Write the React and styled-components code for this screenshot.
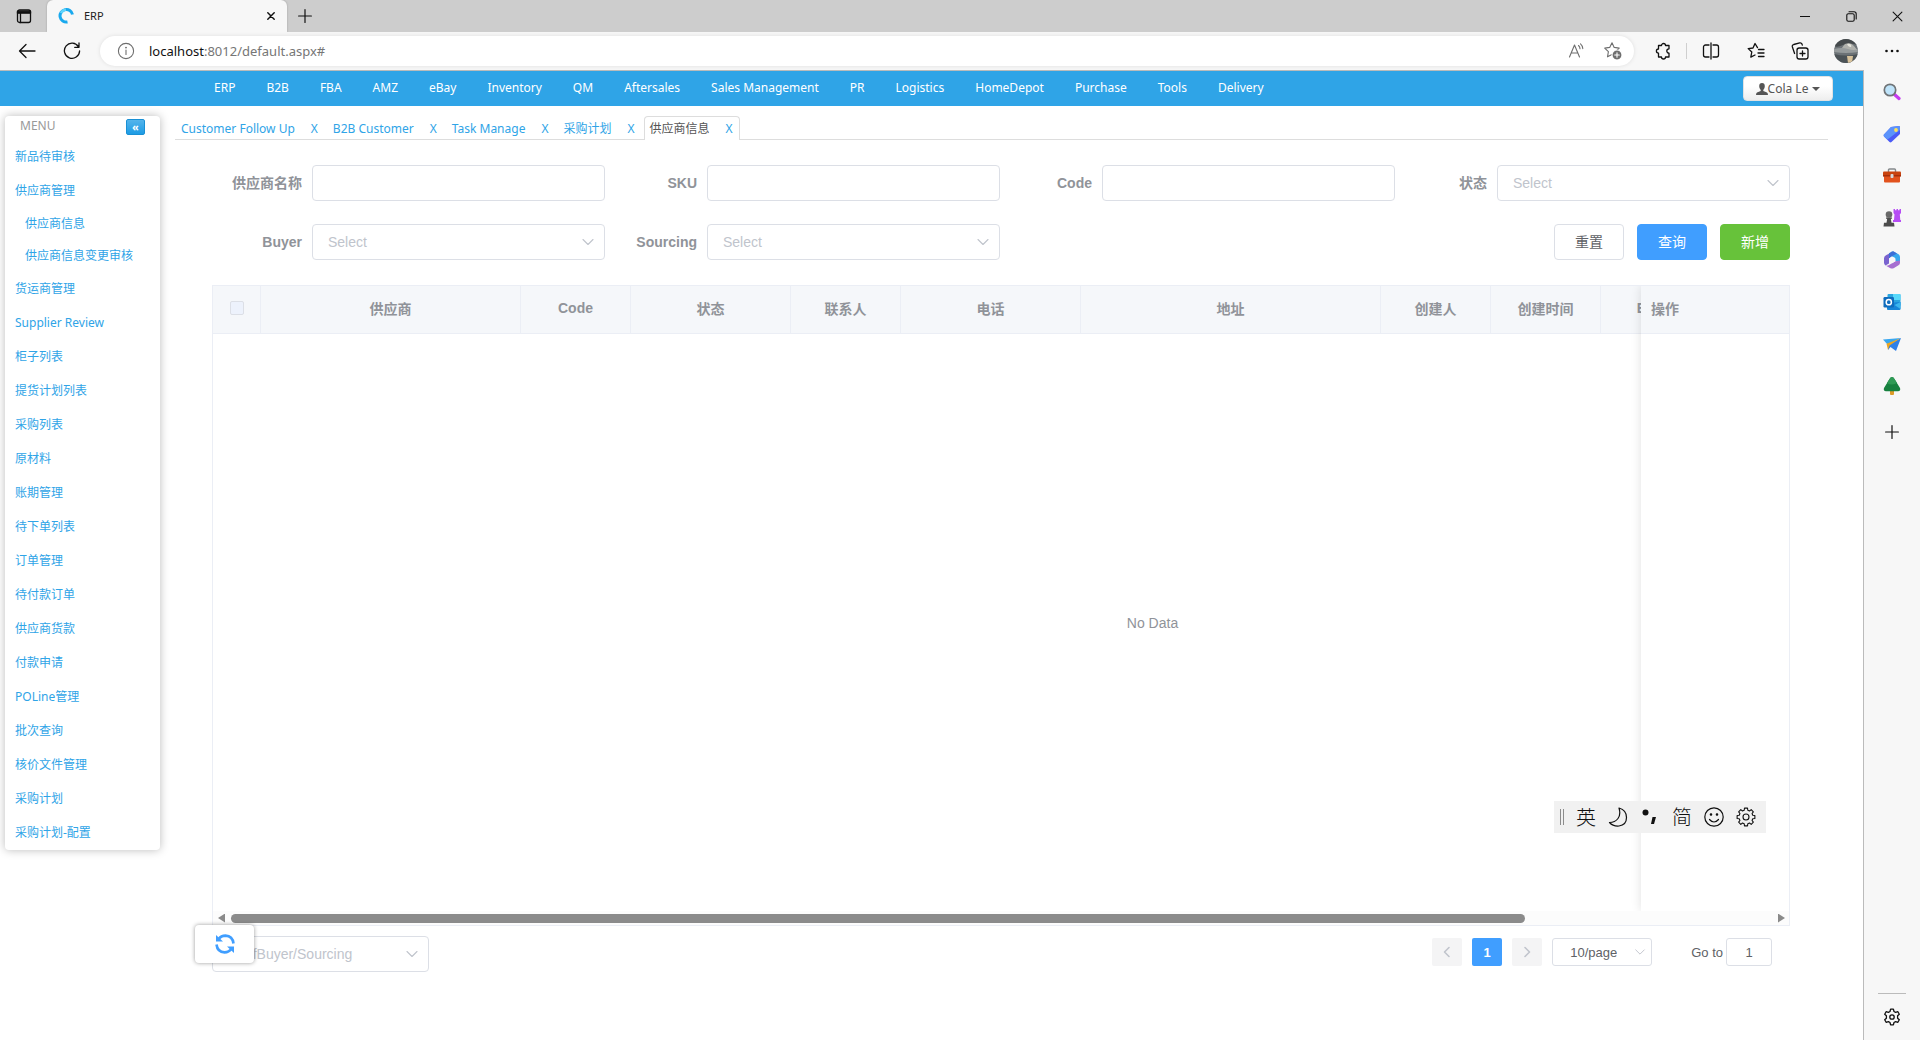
import React from "react";
import styled, { createGlobalStyle } from "styled-components";

const UI = '"Noto Sans", "Noto Sans CJK SC", sans-serif';
const FORM = '"Liberation Sans", "Noto Sans CJK SC", sans-serif';

const GlobalStyle = createGlobalStyle`
  * { box-sizing: border-box; }
  body { margin: 0; font-family: ${UI}; font-size: 12px; color: #555; background: #fff; }
  button, input, select { font: inherit; color: inherit; margin: 0; padding: 0; }
  button { cursor: pointer; }
  a { text-decoration: none; color: #2fa4e7; }
  ul { list-style: none; margin: 0; padding: 0; }
`;

/* ---------- browser frame ---------- */

const Window = styled.div`
  display: flex;
  flex-direction: column;
  min-height: 100vh;
`;

const TabStrip = styled.header`
  display: flex;
  height: 32px;
  background: #cdcdcd;
`;

const IconButton = styled.button`
  display: flex;
  align-items: center;
  justify-content: center;
  flex: none;
  width: ${(p) => p.$w || 44}px;
  height: ${(p) => p.$h || 32}px;
  border: 0;
  background: transparent;
  color: ${(p) => p.$color || "#111"};
`;

const BrowserTab = styled.div`
  display: flex;
  align-items: center;
  width: 240px;
  padding: 0 4px 0 11px;
  gap: 10px;
  background: #f7f7f7;
  border-radius: 6px 6px 0 0;
  color: #222;
  box-shadow: 0 0 2px #999;
  clip-path: inset(0 -3px 0 -3px);
`;

const TabTitle = styled.span`
  flex: 1;
  font-size: 11px;
  line-height: 16px;
`;

const WindowButtons = styled.div`
  display: flex;
  margin-left: auto;
`;

const Toolbar = styled.div`
  display: flex;
  align-items: center;
  height: 38px;
  padding: 0 6px 0 4px;
  background: #f7f7f7;
`;

const AddressBar = styled.form`
  display: flex;
  align-items: center;
  flex: 1;
  height: 30px;
  margin: 0 7px 0 6px;
  padding: 0 3px 0 17px;
  border-radius: 15px;
  background: #fff;
  box-shadow: 0 0 4px rgba(0, 0, 0, 0.1);
`;

const Url = styled.span`
  flex: 1;
  padding-left: 14px;
  font-size: 13px;
  line-height: 18px;
  color: #767676;
  b { font-weight: 400; color: #111; }
`;

const ToolDivider = styled.span`
  width: 1px;
  height: 16px;
  background: #cfcfcf;
  margin: 0 1px;
`;

const Avatar = styled.svg`
  border-radius: 50%;
`;

const Viewport = styled.div`
  display: flex;
  flex: 1;
`;

const Page = styled.div`
  flex: 1;
  min-width: 0;
  border-top: 1px solid #bbb;
  border-right: 1px solid #bbb;
  background: #fff;
`;

const Sidebar = styled.aside`
  display: flex;
  flex-direction: column;
  align-items: center;
  width: 56px;
  padding: 1px 0 2px;
  background: #f7f7f7;
`;

const SidebarAdd = styled(IconButton)`
  height: 50px;
`;

const SidebarRule = styled.hr`
  width: 28px;
  height: 1px;
  margin: auto 0 2px;
  border: 0;
  background: #bbb;
`;

/* ---------- site navigation ---------- */

const Nav = styled.nav`
  display: flex;
  gap: 1px;
  height: 35px;
  padding: 5px 30px 0 199px;
  background: #2fa4e7;
`;

const NavLink = styled.a`
  padding: 0 15px;
  font-size: 12px;
  line-height: 24px;
  color: #fff;
  white-space: nowrap;
`;

const UserButton = styled.button`
  display: flex;
  align-items: center;
  justify-content: center;
  width: 90px;
  height: 25px;
  margin-left: auto;
  border: 1px solid #e2e2e2;
  border-radius: 4px;
  background: linear-gradient(#fff 40%, #eee);
  font-size: 12px;
  color: #555;
`;

const Columns = styled.div`
  display: flex;
  align-items: flex-start;
  padding: 10px 35px 0 5px;
  gap: 15px;
`;

const MenuCard = styled.aside`
  flex: none;
  width: 155px;
  border-radius: 4px;
  background: #fff;
  box-shadow: 0 0 10px #bbb;
`;

const MenuHead = styled.div`
  display: flex;
  justify-content: space-between;
  height: 24px;
  padding: 3px 15px 0;
  font-size: 12px;
  line-height: 14px;
  color: #999;
`;

const CollapseButton = styled.button`
  width: 19px;
  height: 16px;
  border: 1px solid #1990d5;
  border-radius: 2px;
  background: linear-gradient(#54b4eb, #1d9ce5);
  color: #fff;
  font-size: 11px;
  font-weight: 700;
  line-height: 12px;
`;

const MenuLink = styled.a`
  display: block;
  padding-left: ${(p) => (p.$sub ? 20 : 10)}px;
  font-size: 12px;
  line-height: ${(p) => (p.$sub ? 32 : 34)}px;
`;

const Main = styled.main`
  flex: 1;
  min-width: 0;
`;

const Tabs = styled.ul`
  display: flex;
  height: 24px;
  border-bottom: 1px solid #ddd;
`;

const Tab = styled.li`
  display: flex;
  gap: 16px;
  height: ${(p) => (p.$active ? 24 : 23)}px;
  padding: 0 6px 0 ${(p) => (p.$active ? 5 : 6)}px;
  margin-right: 3px;
  border: solid #ddd;
  border-width: ${(p) => (p.$active ? "1px 1px 0" : "0")};
  border-radius: 4px 4px 0 0;
  background: #fff;
  font-size: 12px;
  line-height: ${(p) => (p.$active ? 23 : 25)}px;
  a:first-child { color: ${(p) => (p.$active ? "#555" : "#2fa4e7")}; }
`;

/* ---------- form and table ---------- */

const Panel = styled.div`
  padding: 25px 38px 0 37px;
  font-family: ${FORM};
  font-size: 14px;
`;

const SearchForm = styled.form`
  display: grid;
  grid-template-columns: repeat(4, 1fr);
  gap: 23px 2px;
`;

const Field = styled.div`
  display: flex;
  align-items: center;
`;

const Label = styled.label`
  width: 100px;
  padding-right: 10px;
  text-align: right;
  font-weight: 700;
  line-height: 20px;
  color: #909399;
`;

const TextInput = styled.input`
  flex: 1;
  min-width: 0;
  height: 36px;
  padding: 0 15px;
  border: 1px solid #dcdfe6;
  border-radius: 4px;
  background: #fff;
  outline: 0;
`;

const SelectBox = styled.div`
  display: grid;
  align-items: center;
  flex: ${(p) => (p.$w ? "none" : 1)};
  width: ${(p) => (p.$w ? p.$w + "px" : "auto")};
  select, svg { grid-area: 1 / 1; }
  svg { justify-self: end; margin-right: ${(p) => (p.$small ? 6 : 10)}px; pointer-events: none; }
`;

const SelectInput = styled.select`
  appearance: none;
  width: 100%;
  height: ${(p) => (p.$small ? 28 : 36)}px;
  padding: 0 ${(p) => (p.$small ? 34 : 15)}px 0 ${(p) => (p.$small ? 17 : 15)}px;
  border: 1px solid #dcdfe6;
  border-radius: ${(p) => (p.$small ? 3 : 4)}px;
  background: #fff;
  color: ${(p) => (p.$small ? "#606266" : "#c0c4cc")};
`;

const Actions = styled.div`
  display: flex;
  grid-column: 4;
  justify-content: flex-end;
  gap: 13px;
`;

const schemes = {
  plain: "background: #fff; border-color: #dcdfe6; color: #606266;",
  primary: "background: #409eff; border-color: #409eff; color: #fff;",
  success: "background: #67c23a; border-color: #67c23a; color: #fff;",
};

const Button = styled.button`
  width: 70px;
  height: 36px;
  padding-bottom: 2px;
  border: 1px solid;
  border-radius: 4px;
  font-size: 14px;
  ${(p) => schemes[p.$kind]}
`;

const TableFrame = styled.div`
  margin-top: 25px;
  border: 1px solid #ebeef5;
`;

const TableRow = styled.div`
  display: flex;
`;

const TableScroll = styled.div`
  flex: 1;
  min-width: 0;
  overflow: hidden;
`;

const FixedColumn = styled.div`
  flex: none;
  width: 148px;
  background: #fff;
  box-shadow: 0 0 10px rgba(0, 0, 0, 0.12);
  clip-path: inset(0 0 0 -10px);
`;

const Table = styled.table`
  width: ${(p) => p.$w};
  table-layout: fixed;
  border-collapse: separate;
  border-spacing: 0;
`;

const Th = styled.th`
  width: ${(p) => (p.$w ? p.$w + "px" : "auto")};
  height: 48px;
  padding: 0 10px 3px;
  border-right: ${(p) => (p.$fixed ? 0 : 1)}px solid #ebeef5;
  border-bottom: 1px solid #ebeef5;
  background: #f5f7fa;
  color: #909399;
  text-align: ${(p) => (p.$fixed ? "left" : "center")};
  white-space: nowrap;
  overflow: hidden;
`;

const Td = styled.td`
  height: 577px;
  padding: 0;
  text-align: center;
  color: #909399;
`;

const EmptyText = styled.span`
  padding-left: 150px;
`;

const CheckBox = styled.input`
  appearance: none;
  display: block;
  width: 14px;
  height: 14px;
  margin: 0 auto;
  border: 1px solid #dcdfe6;
  border-radius: 2px;
  background: #edf2fc;
`;

const ScrollBar = styled.div`
  display: flex;
  align-items: center;
  height: 14px;
  padding: 0 4px 0 5px;
  gap: 6px;
  background: #fcfcfc;
`;

const ScrollArrow = styled.button`
  width: 7px;
  height: 9px;
  border: 0;
  background: #8a8a8a;
  clip-path: ${(p) => (p.$left ? "polygon(0 50%, 100% 0, 100% 100%)" : "polygon(0 0, 100% 50%, 0 100%)")};
`;

const ScrollTrack = styled.div`
  flex: 1;
`;

const ScrollThumb = styled.div`
  width: 84%;
  height: 9px;
  border-radius: 5px;
  background: #8b8b8b;
`;

const Footer = styled.footer`
  display: flex;
  align-items: flex-start;
  justify-content: space-between;
  position: relative;
  padding: 10px 18px 0 0;
`;

const RefreshButton = styled.button`
  position: absolute;
  left: -17px;
  top: -1px;
  display: flex;
  align-items: center;
  justify-content: center;
  width: 59px;
  height: 38px;
  border: 0;
  border-radius: 4px;
  background: #fff;
  box-shadow: 0 0 4px rgba(0, 0, 0, 0.4);
`;

const Pagination = styled.div`
  display: flex;
  align-items: center;
  padding-top: 2px;
  gap: 10px;
  font-size: 13px;
  color: #606266;
`;

const PageButton = styled.button`
  display: flex;
  align-items: center;
  justify-content: center;
  width: 30px;
  height: 28px;
  border: 0;
  border-radius: 2px;
  font-weight: 700;
  background: ${(p) => (p.$current ? "#409eff" : "#f4f4f5")};
  color: ${(p) => (p.$current ? "#fff" : "#c0c4cc")};
`;

const GoTo = styled.label`
  display: flex;
  align-items: center;
  gap: 3px;
  padding-left: 29px;
`;

const GoToInput = styled.input`
  width: 46px;
  height: 28px;
  border: 1px solid #dcdfe6;
  border-radius: 3px;
  text-align: center;
`;

const ImeBar = styled.div`
  position: fixed;
  right: 154px;
  bottom: 207px;
  display: flex;
  align-items: center;
  height: 32px;
  padding: 0 4px 0 6px;
  background: #f1f1f1;
`;

const ImeGrip = styled.span`
  width: 4px;
  height: 16px;
  border: solid #8c8c8c;
  border-width: 0 1px;
  margin-right: 6px;
`;

const ImeKey = styled.button`
  display: flex;
  align-items: center;
  justify-content: center;
  width: 32px;
  height: 32px;
  border: 0;
  background: transparent;
  color: #111;
  font-family: "Noto Sans CJK SC", sans-serif;
  font-size: 20px;
  font-weight: 300;
  line-height: 32px;
`;

/* ---------- icons ---------- */

const Svg = ({ s = 20, v = 20, children, w = 1.3, ...rest }) => (
  <svg width={s} height={s} viewBox={`0 0 ${v} ${v}`} fill="none" stroke="currentColor" strokeWidth={w} strokeLinecap="round" strokeLinejoin="round" aria-hidden="true" {...rest}>
    {children}
  </svg>
);

const Chevron = ({ s = 14 }) => (
  <Svg s={s} v={14} w={1.1} stroke="#c0c4cc"><path d="M2 4.5l5 5 5-5" /></Svg>
);

const TabActionsIcon = () => (
  <Svg s={16} v={16}><rect x="1.5" y="2" width="13" height="12.5" rx="2" /><path d="M1.5 3.2h13v2h-13z" fill="currentColor" /><path d="M4.500 5v9.500" /></Svg>
);
const SwirlIcon = () => (
  <svg width="16" height="16" viewBox="0 0 16 16" fill="none" aria-hidden="true">
    <path d="M14.500 6.500A6.300 6.300 0 1 0 9.500 14" stroke="#19a9ee" strokeWidth="3" />
    <path d="M3 5A6.300 6.300 0 0 1 8 1.800" stroke="#5fd4fb" strokeWidth="2.500" />
  </svg>
);
const CloseIcon = ({ s = 8, w = 1.8 }) => <Svg s={s} v={10} w={w}><path d="M1 1l8 8M9 1l-8 8" /></Svg>;
const PlusIcon = () => <Svg s={14} v={14} w={1.2}><path d="M7 .6v12.800M.6 7h12.800" /></Svg>;
const MinIcon = () => <Svg s={10} v={10} w={1}><path d="M0 5.500h10" /></Svg>;
const RestoreIcon = () => <Svg s={11} v={11} w={1.1}><rect x=".8" y="2.800" width="7.400" height="7.400" rx="1.500" /><path d="M3 .8h5a2.200 2.200 0 0 1 2.200 2.200v5" /></Svg>;
const BackIcon = () => <Svg s={18} v={18}><path d="M17 9H1.500M8 2.500L1.500 9 8 15.500" /></Svg>;
const ReloadIcon = () => <Svg s={18} v={18}><path d="M15.500 4.800A7.600 7.600 0 1 0 16.600 9M16 1v4.300h-4.300" /></Svg>;
const InfoIcon = () => <Svg s={18} v={18} w={1.1} stroke="#6e6e6e"><circle cx="9" cy="9" r="7.600" /><path d="M9 8v4.500" /><circle cx="9" cy="5.600" r=".4" /></Svg>;
const ReadIcon = () => <Svg s={18} v={18} w={1.1}><path d="M1.500 15L6.500 3l5 12M3.200 11h6.600M10.500 3.500q1.500 1.300 1.500 3.300M12.500 1.800q2.300 2 2.300 4.800" /></Svg>;
const starPath = "M9 1.700l2.200 4.700 5 .7-3.700 3.600.9 5.100L9 13.400l-4.500 2.400.9-5.100L1.700 7.100l5-.7z";
const AddFavIcon = () => (
  <Svg s={20} v={20} w={1.1}><path d={starPath} /><circle cx="14" cy="14" r="5" fill="#6e6e6e" stroke="#fff" /><path d="M14 11.700v4.600M11.700 14h4.600" stroke="#fff" /></Svg>
);
const PuzzleIcon = () => (
  <Svg s={18} v={18}><path d="M4.500 3.500h3a2 2 0 1 1 4 0h3.500v3.300a2.200 2.200 0 0 0 0 4.400V15h-3.500a2 2 0 1 1-4 0h-3v-3.800a2 2 0 1 1 0-4.200z" /></Svg>
);
const SplitIcon = () => <Svg s={18} v={18}><path d="M7 3H3.500A2 2 0 0 0 1.500 5v8a2 2 0 0 0 2 2H7M11 3h3.500a2 2 0 0 1 2 2v8a2 2 0 0 1-2 2H11M9 1v16" /></Svg>;
const FavListIcon = () => (
  <Svg s={18} v={18}><path d="M10.500 5.600L8 1.500 6 6l-4.800.6L4.800 10l-1 5.200L8 13M11.500 7.500h5.500M11 11h6M11.500 14.500h5.500" /></Svg>
);
const CollectIcon = () => (
  <Svg s={18} v={18}><rect x="6" y="6" width="11" height="11" rx="2.200" /><path d="M11.500 9v5M9 11.500h5M3.600 11.500L1.400 5a2 2 0 0 1 1.300-2.500l6-1.600a2 2 0 0 1 2.300 1.200l.3 1" /></Svg>
);
const DotsIcon = () => <Svg s={16} v={16}><g fill="currentColor" stroke="none"><circle cx="2.500" cy="8" r="1.300" /><circle cx="8" cy="8" r="1.300" /><circle cx="13.500" cy="8" r="1.300" /></g></Svg>;

const AvatarPicture = () => (
  <Avatar width="24" height="24" viewBox="0 0 24 24" aria-label="Profile">
    <rect width="24" height="24" fill="#6c7276" />
    <path d="M0 0h24v6Q15 3 9 6T0 7z" fill="#454a4c" />
    <path d="M11 5q6-2 9 2t4 4H8Q7 9 11 5z" fill="#b0b1ac" />
    <path d="M13 5q3-1 4 1t-1 2-3-3z" fill="#e4e3da" />
    <path d="M0 10q8-2 14 0t10 0v3q-12 2-24 0z" fill="#969b9c" />
    <path d="M0 15q12 3 24 0v9H0z" fill="#4c5357" />
    <path d="M13 17h6l-1 7h-4z" fill="#d8c29b" />
  </Avatar>
);

const gearPath = (() => {
  const pts = [];
  const n = 8;
  for (let i = 0; i < n; i++) {
    const a = (i / n) * Math.PI * 2 - Math.PI / 2;
    [[-0.26, 7], [-0.17, 9], [0.17, 9], [0.26, 7]].forEach(([d, r]) => {
      pts.push(`${(10 + r * Math.cos(a + d)).toFixed(2)} ${(10 + r * Math.sin(a + d)).toFixed(2)}`);
    });
  }
  return `M${pts.join("L")}z`;
})();

const GearIcon = ({ s = 20, w = 1.1 }) => <Svg s={s} v={20} w={w}><path d={gearPath} /><circle cx="10" cy="10" r="3" /></Svg>;

const SettingsIcon = () => (
  <Svg s={18} v={18} w={1.3}>
    <path d="M7.600 1.200h2.800l.6 2.300 1.600.9 2.300-.7 1.400 2.500-1.700 1.600v2.400l1.700 1.600-1.400 2.500-2.300-.7-1.600.9-.6 2.300H7.600L7 14.500l-1.600-.9-2.300.7-1.400-2.500 1.700-1.600V7.800L1.700 6.200l1.400-2.500 2.300.7L7 3.500z" />
    <circle cx="9" cy="9" r="2.200" />
  </Svg>
);

const Pic = ({ children }) => <svg width="18" height="18" viewBox="0 0 18 18" aria-hidden="true">{children}</svg>;

const sidebarIcons = [
  ["Search", <Pic><path d="M11.500 11.500l4.500 4" stroke="#c43bf0" strokeWidth="3.200" strokeLinecap="round" /><circle cx="7" cy="7" r="5.700" fill="#bfe4fa" stroke="#707477" strokeWidth="1.700" /></Pic>],
  ["Shopping", <Pic><path d="M8 2l8-1 1 .8V9l-8.500 8q-1 .8-2 0L1 11.500q-.8-1 0-2z" fill="#4b5bf6" /><path d="M8 2l8-1 1 .8V5L4.500 14.500 1 11.500q-.8-1 0-2z" fill="#5b93fb" /><circle cx="13" cy="5" r="1.900" fill="#ffe05c" /></Pic>],
  ["Tools", <Pic><path d="M5.500 5V3q0-1 1-1h5q1 0 1 1v2" fill="none" stroke="#85898c" strokeWidth="1.400" /><rect x="0" y="4.500" width="18" height="5" rx="1" fill="#c9430f" /><path d="M1 8h16v6.500q0 1-1 1H2q-1 0-1-1z" fill="#e2521d" /><path d="M0 8h18v1.500H0z" fill="#a62f0c" /><rect x="7.500" y="7" width="3" height="4" rx="1" fill="#d6dadc" /></Pic>],
  ["Games", <Pic><path d="M10.500 0h1.500v1.300h1.500V0H15v1.300h1.500V0H18v4l-1.200 1.500.5 5.500h.7v2h-8v-2h1l.5-5.500L10.500 4z" fill="#b64df5" /><circle cx="6" cy="5.500" r="3.300" fill="#696969" /><path d="M3 8.500h6v1.300H7.800l.7 4H11l.5 3.700H.5L1 13.800h2.500l.7-4H3z" fill="#4c4c4c" /></Pic>],
  ["Microsoft 365", (
    <Pic>
      <path d="M10.500.3L3 4.200Q1 5.300 1 7.200v4.600q0 1.700 1.500 2.700L6 12.500v-5q0-1.300 1.300-2L12 3z" fill="#7a63cf" />
      <path d="M8.500.8q1.200-.7 2.500 0l4.500 2.500Q17 4.200 17 6v6l-4.500-2.300V8q0-1-1-1.600L7 4.500z" fill="#36a8ee" />
      <path d="M8.500.8q1.200-.7 2.500 0l3 1.700L8.500 5.500 6 7.500V2.300z" fill="#3b6fd6" />
      <path d="M17 9.500v2.300q0 1.700-1.500 2.500L11 17q-2 1-4 0l-4.500-2.500q2 .5 3.500-.5l6.500-3.700z" fill="#a66fd0" />
      <path d="M9 6l3 1.600v3L9 12.300l-3-1.700v-3z" fill="#f7f7f7" />
    </Pic>
  )],
  ["Outlook", <Pic><rect x="4.500" y="1" width="13" height="12" rx="1" fill="#2aa5e0" /><path d="M10 1h6.500q1 0 1 1v5H10z" fill="#58d9fb" /><path d="M4 10l13.500-1v7q0 1-1 1H5q-1 0-1-1z" fill="#1685d8" /><path d="M17.500 9v7l-6-4z" fill="#3bb5ee" /><rect x=".5" y="4" width="10.500" height="10.500" rx="1.200" fill="#0f6cbd" /><circle cx="5.800" cy="9.200" r="2.600" fill="none" stroke="#fff" strokeWidth="1.500" /></Pic>],
  ["Drop", <Pic><path d="M0 4.500L18 3 5 10z" fill="#38a7f0" /><path d="M18 3L5 10v5l2.500-3 5.500 4z" fill="#2f80e8" /><path d="M17.500 3.200L3.500 8.800 5 15l1.500-4.500z" fill="#eda51f" /></Pic>],
  ["Tree", <Pic><rect x="7" y="13" width="4" height="5" rx="1" fill="#dd9a27" /><path d="M9 0q1.500 0 2.500 2l5.500 9q1 3-2 3.200H3Q0 14 1 11l5.500-9Q7.500 0 9 0z" fill="#17813f" /><path d="M9 0q1.500 0 2.500 2L14 6Q8 9 4 6l2.500-4Q7.500 0 9 0z" fill="#2f9a55" /></Pic>],
];

const UserIcon = () => (
  <svg width="12" height="12" viewBox="0 0 12 12" fill="#555" aria-hidden="true"><path d="M6 0q2.800 0 2.800 3.200Q8.800 5.800 7.300 7v1l3.700 1.600q1 .6 1 2.400H0q0-1.800 1-2.400L4.700 8V7Q3.200 5.800 3.200 3.200 3.200 0 6 0z" /></svg>
);
const CaretIcon = () => <svg width="12" height="4" viewBox="0 0 12 4" fill="#555" aria-hidden="true"><path d="M4 0h8L8 4z" /></svg>;
const RefreshIcon = () => (
  <svg width="22" height="22" viewBox="0 0 22 22" fill="none" aria-hidden="true">
    <path d="M4.500 6.200Q7 2.600 11.500 2.600 18.600 3 19.500 10.500" stroke="#409eff" strokeWidth="2.600" />
    <path d="M17.500 15.800Q15 19.400 10.500 19.400 3.400 19 2.500 11.500" stroke="#409eff" strokeWidth="2.600" />
    <path d="M2 2v6.500h7z" fill="#409eff" />
    <path d="M20 20v-6.500h-7z" fill="#409eff" />
  </svg>
);
const ArrowIcon = ({ next }) => <Svg s={12} v={12} w={1.6}><path d={next ? "M4 1.500L8.500 6 4 10.500" : "M8 1.500L3.500 6 8 10.500"} /></Svg>;
const MoonIcon = () => <Svg s={20} v={20} w={1.2}><path d="M11 1Q18.500 3 18.500 10.500T11 19Q5 19.500 1.500 15.500 7 15.500 10 11.500T11 1z" /></Svg>;
const PunctIcon = () => <svg width="20" height="20" viewBox="0 0 20 20" fill="#111" aria-hidden="true"><circle cx="5.500" cy="5.500" r="3" /><path d="M12.500 10h3.500l-2 7h-3z" /></svg>;
const SmileIcon = () => <Svg s={20} v={20} w={1.2}><circle cx="10" cy="10" r="9.200" /><path d="M5.500 12.500q4.500 5 9 0" /><circle cx="7" cy="7.500" r=".7" fill="currentColor" /><circle cx="13" cy="7.500" r=".7" fill="currentColor" /></Svg>;

/* ---------- data ---------- */

const navItems = ["ERP", "B2B", "FBA", "AMZ", "eBay", "Inventory", "QM", "Aftersales", "Sales Management", "PR", "Logistics", "HomeDepot", "Purchase", "Tools", "Delivery"];

const menuItems = [
  ["新品待审核"], ["供应商管理"], ["供应商信息", true], ["供应商信息变更审核", true], ["货运商管理"], ["Supplier Review"],
  ["柜子列表"], ["提货计划列表"], ["采购列表"], ["原材料"], ["账期管理"], ["待下单列表"], ["订单管理"], ["待付款订单"],
  ["供应商货款"], ["付款申请"], ["POLine管理"], ["批次查询"], ["核价文件管理"], ["采购计划"], ["采购计划-配置"],
];

const tabItems = ["Customer Follow Up", "B2B Customer", "Task Manage", "采购计划", "供应商信息"];

const columns = [["供应商", 260], ["Code", 110], ["状态", 160], ["联系人", 110], ["电话", 180], ["地址", 300], ["创建人", 110], ["创建时间", 110], ["Email", 110]];

function Select({ id, text, ...rest }) {
  return (
    <SelectBox {...rest}>
      <SelectInput id={id} aria-label={text} $small={rest.$small}><option>{text}</option></SelectInput>
      <Chevron s={rest.$small ? 12 : 14} />
    </SelectBox>
  );
}

function FormField({ id, label, select }) {
  return (
    <Field>
      <Label htmlFor={id}>{label}</Label>
      {select ? <Select id={id} text="Select" /> : <TextInput id={id} />}
    </Field>
  );
}

function BrowserHeader() {
  return (
    <>
      <TabStrip>
        <IconButton $w={47} aria-label="Tab actions"><TabActionsIcon /></IconButton>
        <BrowserTab>
          <SwirlIcon />
          <TabTitle>ERP</TabTitle>
          <IconButton $w={24} $h={24} aria-label="Close tab"><CloseIcon /></IconButton>
        </BrowserTab>
        <IconButton $w={36} aria-label="New tab"><PlusIcon /></IconButton>
        <WindowButtons>
          <IconButton $w={46} aria-label="Minimize"><MinIcon /></IconButton>
          <IconButton $w={46} aria-label="Restore"><RestoreIcon /></IconButton>
          <IconButton $w={46} aria-label="Close"><CloseIcon s={11} w={1} /></IconButton>
        </WindowButtons>
      </TabStrip>
      <Toolbar>
        <IconButton $w={46} aria-label="Back"><BackIcon /></IconButton>
        <IconButton aria-label="Reload"><ReloadIcon /></IconButton>
        <AddressBar>
          <InfoIcon />
          <Url><b>localhost</b>:8012/default.aspx#</Url>
          <IconButton $w={36} $h={30} $color="#6e6e6e" type="button" aria-label="Read aloud"><ReadIcon /></IconButton>
          <IconButton $w={36} $h={30} $color="#6e6e6e" type="button" aria-label="Add to favorites"><AddFavIcon /></IconButton>
        </AddressBar>
        <IconButton aria-label="Extensions"><PuzzleIcon /></IconButton>
        <ToolDivider />
        <IconButton $w={46} aria-label="Split screen"><SplitIcon /></IconButton>
        <IconButton aria-label="Favorites"><FavListIcon /></IconButton>
        <IconButton aria-label="Collections"><CollectIcon /></IconButton>
        <IconButton $w={48} aria-label="Profile"><AvatarPicture /></IconButton>
        <IconButton aria-label="Settings and more"><DotsIcon /></IconButton>
      </Toolbar>
    </>
  );
}

function SupplierTable() {
  return (
    <TableFrame>
      <TableRow>
        <TableScroll>
          <Table $w="1729px">
            <thead>
              <tr>
                <Th $w={48}><CheckBox type="checkbox" aria-label="Select all" /></Th>
                {columns.map(([t, w]) => <Th key={t} $w={w}>{t}</Th>)}
                <Th />
              </tr>
            </thead>
            <tbody>
              <tr><Td colSpan={11}><EmptyText>No Data</EmptyText></Td></tr>
            </tbody>
          </Table>
        </TableScroll>
        <FixedColumn>
          <Table $w="100%">
            <thead><tr><Th $fixed>操作</Th></tr></thead>
            <tbody><tr><Td /></tr></tbody>
          </Table>
        </FixedColumn>
      </TableRow>
      <ScrollBar>
        <ScrollArrow $left aria-label="Scroll left" />
        <ScrollTrack><ScrollThumb /></ScrollTrack>
        <ScrollArrow aria-label="Scroll right" />
      </ScrollBar>
    </TableFrame>
  );
}

export default function App() {
  return (
    <Window>
      <GlobalStyle />
      <BrowserHeader />
      <Viewport>
        <Page>
          <Nav>
            {navItems.map((n) => <NavLink key={n} href="#">{n}</NavLink>)}
            <UserButton><UserIcon />Cola Le<CaretIcon /></UserButton>
          </Nav>
          <Columns>
            <MenuCard>
              <MenuHead>MENU<CollapseButton>«</CollapseButton></MenuHead>
              <ul>
                {menuItems.map(([t, sub]) => <li key={t}><MenuLink href="#" $sub={sub}>{t}</MenuLink></li>)}
              </ul>
            </MenuCard>
            <Main>
              <Tabs>
                {tabItems.map((t, i) => (
                  <Tab key={t} $active={i === 4}><a href="#">{t}</a><a href="#">X</a></Tab>
                ))}
              </Tabs>
              <Panel>
                <SearchForm>
                  <FormField id="name" label="供应商名称" />
                  <FormField id="sku" label="SKU" />
                  <FormField id="code" label="Code" />
                  <FormField id="status" label="状态" select />
                  <FormField id="buyer" label="Buyer" select />
                  <FormField id="sourcing" label="Sourcing" select />
                  <Actions>
                    <Button type="button" $kind="plain">重置</Button>
                    <Button type="button" $kind="primary">查询</Button>
                    <Button type="button" $kind="success">新增</Button>
                  </Actions>
                </SearchForm>
                <SupplierTable />
                <Footer>
                  <Select id="staff" text="StaffBuyer/Sourcing" $w={217} />
                  <Pagination>
                    <PageButton aria-label="Previous page"><ArrowIcon /></PageButton>
                    <PageButton $current>1</PageButton>
                    <PageButton aria-label="Next page"><ArrowIcon next /></PageButton>
                    <Select id="size" text="10/page" $w={100} $small />
                    <GoTo>Go to<GoToInput defaultValue="1" /></GoTo>
                  </Pagination>
                  <RefreshButton aria-label="Refresh"><RefreshIcon /></RefreshButton>
                </Footer>
              </Panel>
            </Main>
          </Columns>
        </Page>
        <Sidebar>
          {sidebarIcons.map(([name, icon]) => <IconButton key={name} $h={42} aria-label={name}>{icon}</IconButton>)}
          <SidebarAdd aria-label="Customize"><PlusIcon /></SidebarAdd>
          <SidebarRule />
          <IconButton $h={42} aria-label="Settings"><SettingsIcon /></IconButton>
        </Sidebar>
      </Viewport>
      <ImeBar>
        <ImeGrip />
        <ImeKey>英</ImeKey>
        <ImeKey aria-label="Half width"><MoonIcon /></ImeKey>
        <ImeKey aria-label="Punctuation"><PunctIcon /></ImeKey>
        <ImeKey>简</ImeKey>
        <ImeKey aria-label="Emoji"><SmileIcon /></ImeKey>
        <ImeKey aria-label="Settings"><GearIcon /></ImeKey>
      </ImeBar>
    </Window>
  );
}
